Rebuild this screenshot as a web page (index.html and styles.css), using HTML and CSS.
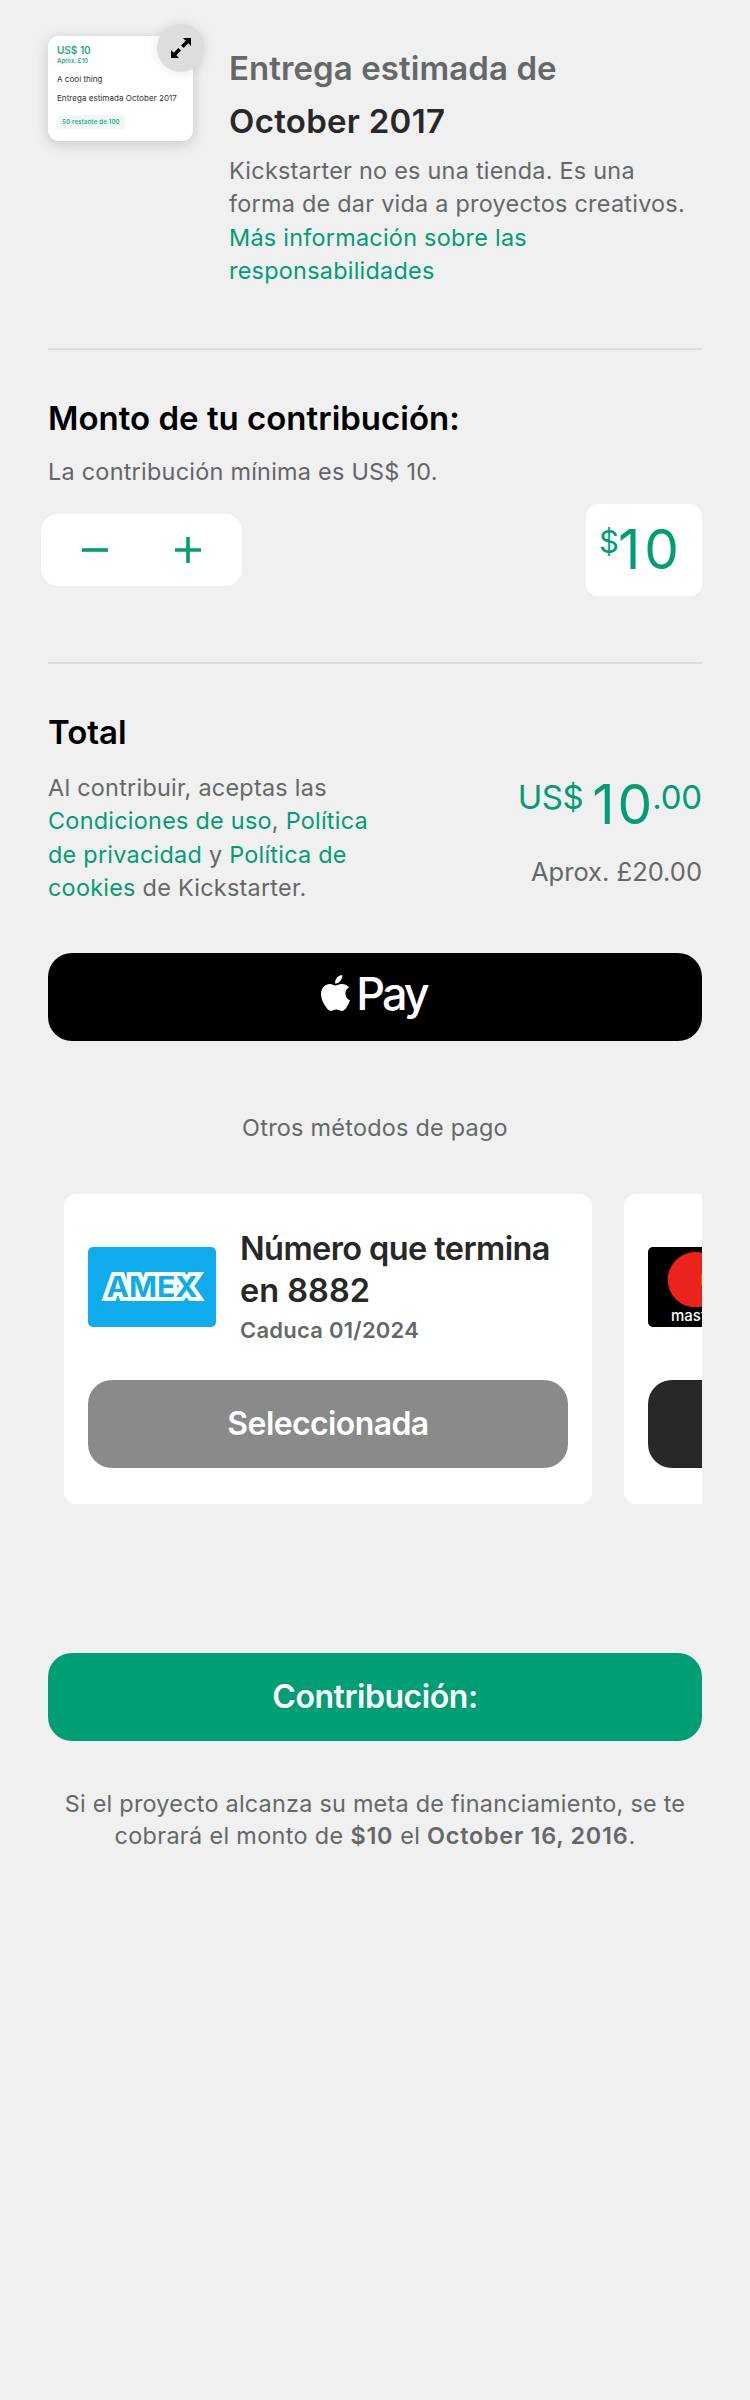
FILE: index.html
```
<!DOCTYPE html>
<html lang="es">
<head>
<meta charset="utf-8">
<title>Contribución</title>
<link rel="stylesheet" href="styles.css">
</head>
<body>
<main class="page">
  <section class="summary">
    <div class="thumb">
      <div class="thumb-price">US$ 10</div>
      <div class="thumb-approx">Aprox. £10</div>
      <div class="thumb-title">A cool thing</div>
      <div class="thumb-delivery">Entrega estimada October 2017</div>
      <div class="thumb-badge">50 restante de 100</div>
      <div class="expand">
        <svg width="20" height="20" viewBox="0 0 20 20"><path d="M12 0h8v8l-2.700-2.700-4.700 4.700-2.600-2.600 4.700-4.700zM8 20H0v-8l2.700 2.700 4.700-4.700 2.600 2.600-4.700 4.700z"/></svg>
      </div>
    </div>
    <div class="delivery">
      <h2 class="heading muted delivery-label">Entrega estimada de</h2>
      <h2 class="heading dark delivery-date">October 2017</h2>
      <p class="copy delivery-copy">Kickstarter no es una tienda. Es una<br>forma de dar vida a proyectos creativos.<br><a class="link">Más información sobre las<br>responsabilidades</a></p>
    </div>
  </section>

  <section class="amount">
    <h2 class="heading amount-title">Monto de tu contribución:</h2>
    <p class="copy minimum">La contribución mínima es US$ 10.</p>
    <div class="amount-row">
      <div class="stepper">
        <svg width="26" height="26" viewBox="0 0 26 26"><path d="M0 13h26"/></svg>
        <svg width="26" height="26" viewBox="0 0 26 26"><path d="M0 13h26M13 0v26"/></svg>
      </div>
      <div class="field"><span class="field-currency">$</span><span class="field-value">10</span></div>
    </div>
  </section>

  <section class="total">
    <h2 class="heading total-title">Total</h2>
    <div class="total-row">
      <p class="copy terms">Al contribuir, aceptas las<br><a class="link">Condiciones de uso</a>, <a class="link">Política<br>de privacidad</a> y <a class="link">Política de<br>cookies</a> de Kickstarter.</p>
      <div class="sum">
        <div class="price"><span class="price-small">US$</span><span class="price-big">10</span><span class="price-cents">.00</span></div>
        <div class="approx">Aprox. £20.00</div>
      </div>
    </div>
  </section>

  <div class="button apple-pay">
    <svg width="29" height="36" viewBox="0 0 29 36"><path d="M21.200 0c.3 2.300-.6 4.500-1.900 6-1.400 1.600-3.300 2.600-5.200 2.400-.3-2.200.8-4.500 2-5.800C17.500 1.100 19.600.1 21.200 0zM28 12.300c-2.200 1.400-3.600 3.300-3.600 6.200 0 3.400 2 5.800 4.600 6.900-.8 2.500-2 4.700-3.400 6.800-1.300 1.900-2.700 3.700-4.900 3.700s-2.800-1.300-5.300-1.300c-2.500 0-3.300 1.300-5.300 1.300-2.200 0-3.800-2-5.100-3.900C2 27.700 0 23.600 0 19.400c0-6.800 4.400-10.400 8.800-10.400 2.300 0 4.200 1.500 5.700 1.500 1.400 0 3.600-1.600 6.200-1.600 3 0 5.600 1.200 7.300 3.400z"/></svg>
    <span class="apple-pay-label">Pay</span>
  </div>

  <p class="copy other-methods">Otros métodos de pago</p>

  <div class="cards">
    <article class="card">
      <div class="card-info">
        <svg class="card-logo" width="128" height="80" viewBox="0 0 128 80">
          <rect width="128" height="80" rx="5" fill="#0eacec"/>
          <text class="amex-text" x="18.500" y="50.300" textLength="91" lengthAdjust="spacingAndGlyphs">AMEX</text>
        </svg>
        <div class="card-text">
          <div class="card-title"><span class="card-title-lead">Número que termina</span><br>en 8882</div>
          <div class="card-expiry">Caduca 01/2024</div>
        </div>
      </div>
      <div class="button selected">Seleccionada</div>
    </article>
    <article class="card">
      <div class="card-info">
        <svg class="card-logo" width="128" height="80" viewBox="0 0 128 80">
          <rect width="128" height="80" rx="5"/>
          <circle cx="47.300" cy="32.700" r="27.600" fill="#eb231c"/>
          <circle cx="80.700" cy="32.700" r="27.600" fill="#f79e1b"/>
          <path d="M64 10.700a27.600 27.600 0 0 1 0 44a27.600 27.600 0 0 1 0-44z" fill="#ff5f00"/>
          <text class="mc-text" x="23" y="74">mastercard</text>
        </svg>
      </div>
      <div class="button dark-button"></div>
    </article>
  </div>

  <div class="button pledge">Contribución:</div>
  <p class="copy footnote">Si el proyecto alcanza su meta de financiamiento, se te<br><span class="footnote-end">cobrará el monto de <b>$10</b> el <b>October 16, 2016</b>.</span></p>
</main>
</body>
</html>
```
FILE: styles.css
```
* { box-sizing: border-box; }
body { margin: 0; background: #f0f0f0; font-family: Inter, "Liberation Sans", sans-serif; }
h2, p { margin: 0; }
.page { width: 750px; height: 2400px; padding: 36px 48px 0; display: flex; flex-direction: column; background: #f0f0f0; }
.heading { font-size: 33px; font-weight: 600; line-height: 53px; white-space: nowrap; color: #000; letter-spacing: 0; }
.muted { color: #656868; }
.dark { color: #282828; }
.copy { font-size: 23.400px; line-height: 33.300px; letter-spacing: 0.26px; color: #656868; white-space: nowrap; }
.link { color: #009e74; }

.summary { display: flex; gap: 36px; height: 314px; border-bottom: 2px solid #dcdedd; }
.thumb { position: relative; width: 145px; height: 105px; padding: 9px 9px 0; background: #fff; border-radius: 11px; box-shadow: 0 3px 14px rgba(0,0,0,.17); white-space: nowrap; }
.thumb-price { font-size: 10px; font-weight: 600; line-height: 10px; color: #25ac86; }
.thumb-approx { font-size: 6px; font-weight: 600; line-height: 12px; color: #25ac86; }
.thumb-title { margin-top: 6px; font-size: 8.100px; line-height: 12px; color: #333; }
.thumb-delivery { margin-top: 7px; font-size: 8.100px; line-height: 12px; color: #333; }
.thumb-badge { display: inline-block; width: 68px; height: 14px; margin-top: 11px; border-radius: 2px; background: #eef8f6; color: #25ac86; font-size: 6px; font-weight: 600; letter-spacing: 0.2px; line-height: 14px; text-align: center; vertical-align: top; }
.expand { position: absolute; left: 109px; top: -12px; width: 48px; height: 48px; padding: 14px; border-radius: 50%; background: #dcdedd; box-shadow: 0 0 12px rgba(0,0,0,.1); }
.expand svg { display: block; }
.delivery { padding-top: 6px; }
.delivery-label { letter-spacing: 0.08px; }
.delivery-date { letter-spacing: 0.28px; }
.delivery-copy { margin-top: 6px; }

.amount { height: 314px; padding-top: 42px; border-bottom: 2px solid #dcdedd; }
.minimum { margin-top: 10px; color: #656569; }
.amount-row { display: flex; justify-content: space-between; align-items: center; margin: 16px 0 0 -7px; }
.stepper { display: flex; align-items: center; gap: 67px; width: 201px; height: 72px; padding-left: 41px; border-radius: 17px; background: #fff; }
.stepper svg { fill: none; stroke: #009e74; stroke-width: 3.600; }
.field { display: flex; align-items: flex-start; width: 116px; height: 92px; padding: 12px 0 0 13px; border-radius: 12px; background: #fff; color: #009e74; }
.field-currency { font-size: 31px; line-height: 52px; letter-spacing: -1px; }
.field-value { font-size: 55px; line-height: 66px; letter-spacing: 4px; }

.total { height: 289px; padding-top: 42px; }
.total-row { display: flex; justify-content: space-between; margin-top: 12px; }
.sum { text-align: right; }
.price { display: flex; align-items: flex-start; justify-content: flex-end; color: #009e74; white-space: nowrap; }
.price-small { font-size: 33px; line-height: 52px; letter-spacing: -0.5px; }
.price-cents { font-size: 33px; line-height: 52px; letter-spacing: -0.2px; }
.price-big { margin: 0 -3px 0 9px; font-size: 55px; line-height: 66px; letter-spacing: 3px; }
.approx { margin-top: 18px; font-size: 25.500px; line-height: 34px; color: #656868; }

.button { display: flex; align-items: center; justify-content: center; height: 88px; flex: none; border-radius: 24px; color: #fff; font-size: 32px; font-weight: 600; line-height: 40px; letter-spacing: -0.45px; }
.apple-pay { gap: 6px; padding-right: 2px; background: #000; }
.apple-pay svg { fill: #fff; margin-top: -9px; }
.apple-pay-label { margin-top: -6px; font-size: 45px; font-weight: 500; letter-spacing: -2.900px; }
.other-methods { margin-top: 70px; text-align: center; }
.cards { display: flex; gap: 32px; height: 310px; margin-top: 50px; padding-left: 16px; overflow: hidden; }
.card { flex: none; width: 528px; padding: 34px 24px 36px; border-radius: 12px; background: #fff; }
.card-info { display: flex; gap: 24px; height: 152px; }
.card-logo { flex: none; margin-top: 19px; }
.card-title { font-size: 32.500px; font-weight: 600; line-height: 42px; color: #282828; white-space: nowrap; }
.card-title-lead { letter-spacing: -0.6px; }
.card-expiry { margin-top: 4px; font-size: 22px; font-weight: 600; line-height: 28px; letter-spacing: 0.25px; color: #656868; white-space: nowrap; }
.amex-text { font: 700 29px Inter, sans-serif; fill: #0eacec; stroke: #fff; stroke-width: 8; stroke-miterlimit: 3; paint-order: stroke; }
.mc-text { font: 500 15px Inter, sans-serif; fill: #fff; }
.selected { background: #8a8a8a; letter-spacing: -0.6px; }
.dark-button { background: #282828; }
.pledge { margin-top: 149px; background: #009e74; }
.footnote { margin-top: 47px; text-align: center; line-height: 32px; letter-spacing: 0.24px; }
.footnote-end { letter-spacing: 0.35px; }
.footnote b { font-weight: 600; letter-spacing: 0.75px; }
```
